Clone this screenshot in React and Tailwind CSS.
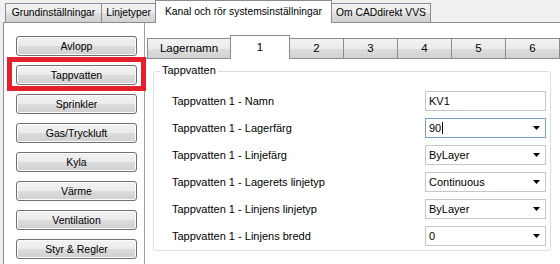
import React from "react"

const topTabs = [
  { label: "Grundinställningar", w: "w-[97px]" },
  { label: "Linjetyper", w: "w-[55px]" },
  { label: "Kanal och rör systemsinställningar", w: "w-[177px]", active: true },
  { label: "Om CADdirekt VVS", w: "w-[100px]" },
]

const innerTabs = [
  { label: "Lagernamn", w: "w-[84px]" },
  { label: "1", w: "w-[60px]", active: true },
  { label: "2", w: "w-[55px]" },
  { label: "3", w: "w-[55px]" },
  { label: "4", w: "w-[55px]" },
  { label: "5", w: "w-[55px]" },
  { label: "6", w: "w-[55px]" },
  { label: "", w: "w-[55px]" },
]

const systems = ["Avlopp", "Tappvatten", "Sprinkler", "Gas/Tryckluft", "Kyla", "Värme", "Ventilation", "Styr & Regler"]

const rows = [
  { label: "Tappvatten 1 - Namn", value: "KV1", kind: "text" },
  { label: "Tappvatten 1 - Lagerfärg", value: "90", kind: "combo", focus: true },
  { label: "Tappvatten 1 - Linjefärg", value: "ByLayer", kind: "combo" },
  { label: "Tappvatten 1 - Lagerets linjetyp", value: "Continuous", kind: "combo" },
  { label: "Tappvatten 1 - Linjens linjetyp", value: "ByLayer", kind: "combo" },
  { label: "Tappvatten 1 - Linjens bredd", value: "0", kind: "combo" },
]

const tabGradient = "bg-[linear-gradient(#f3f3f3,#ebebeb_50%,#dedede_50%,#d2d2d2)]"

function TopTab({ label, w, active, first }) {
  if (active) {
    return (
      <div className={`${w} shrink-0 h-[23px] -mb-px -ml-px relative z-10 bg-white border border-b-0 border-[#898c95] flex items-center pl-[9px] pt-[1px]`}>
        {label}
      </div>
    )
  }
  return (
    <div className={`${w} shrink-0 h-[19px] ${first ? "" : "-ml-px"} border border-b-0 border-[#898c95] ${tabGradient} flex items-center justify-center`}>
      {label}
    </div>
  )
}

function InnerTab({ label, w, active, first }) {
  if (active) {
    return (
      <div className={`${w} shrink-0 h-[24px] -mb-px -ml-px relative z-10 bg-white border border-b-0 border-[#898c95] flex items-center justify-center text-[11.5px]`}>
        {label}
      </div>
    )
  }
  return (
    <div className={`${w} shrink-0 h-[20px] ${first ? "" : "-ml-px"} border border-b-0 border-[#898c95] ${tabGradient} flex items-center justify-center pt-[1px] text-[11.5px]`}>
      {label}
    </div>
  )
}

function SysButton({ label }) {
  return (
    <div className="w-[121px] h-[20px] rounded-[3px] border border-[#707070] bg-[linear-gradient(#f2f2f2,#ebebeb_50%,#dddddd_50%,#cfcfcf)] shadow-[inset_0_0_0_1px_#fcfcfc] flex items-center justify-center">
      {label}
    </div>
  )
}

function Field({ value, kind, focus }) {
  return (
    <div className={`w-[121px] h-[20px] border ${focus ? "border-[#7a9cc8]" : "border-[#c3c6cc]"} bg-white flex items-center pl-[3px]`}>
      <span>{value}</span>
      {focus && <span className="w-px h-[12px] bg-black ml-[1px]" />}
      {kind === "combo" && (
        <svg className="ml-auto mr-[5px]" width="7" height="4" viewBox="0 0 7 4">
          <path d="M0 0h7L3.5 4z" fill="#000" />
        </svg>
      )}
    </div>
  )
}

export default function App() {
  return (
    <div className="relative w-[560px] h-[264px] overflow-hidden bg-[#f0f0f0] text-black text-[10.5px] leading-none font-['Liberation_Sans',Arial,sans-serif]">
      {/* top tabs */}
      <div className="flex items-end h-[22px] pl-[5px] text-[10.3px]">
        {topTabs.map((t, i) => (
          <TopTab key={t.label} {...t} first={i === 0} />
        ))}
      </div>

      <div className="ml-[3px] h-[242px] bg-white border-t border-l border-[#898c95] flex">
        {/* system buttons */}
        <div className="w-[141px] shrink-0 border-r border-[#a0a0a0] flex flex-col pl-[12px] pt-[13px] gap-[9px]">
          {systems.map((s) => (
            <SysButton key={s} label={s} />
          ))}
        </div>

        <div className="flex-1 flex flex-col min-w-0">
          <div className="flex items-end h-[35px] pl-[2px]">
            {innerTabs.map((t, i) => (
              <InnerTab key={i} {...t} first={i === 0} />
            ))}
          </div>
          <div className="flex-1 border-t border-[#898c95] pl-[8px] pt-[12px]">
            <div className="relative w-[398px] h-[180px] rounded-[3px] border border-[#d5dfe5] pl-[18px] pr-[4px] pt-[19px] flex flex-col gap-[7px] text-[11px]">
              <span className="absolute -top-[7px] left-[6px] px-[2px] bg-white">Tappvatten</span>
              {rows.map((r) => (
                <div key={r.label} className="flex items-center justify-between">
                  <span>{r.label}</span>
                  <Field {...r} />
                </div>
              ))}
            </div>
          </div>
        </div>
      </div>

      {/* highlight */}
      <div className="absolute left-[7px] top-[57px] w-[139px] h-[34px] border-[5px] border-[#e3202b] pointer-events-none" />
    </div>
  )
}
